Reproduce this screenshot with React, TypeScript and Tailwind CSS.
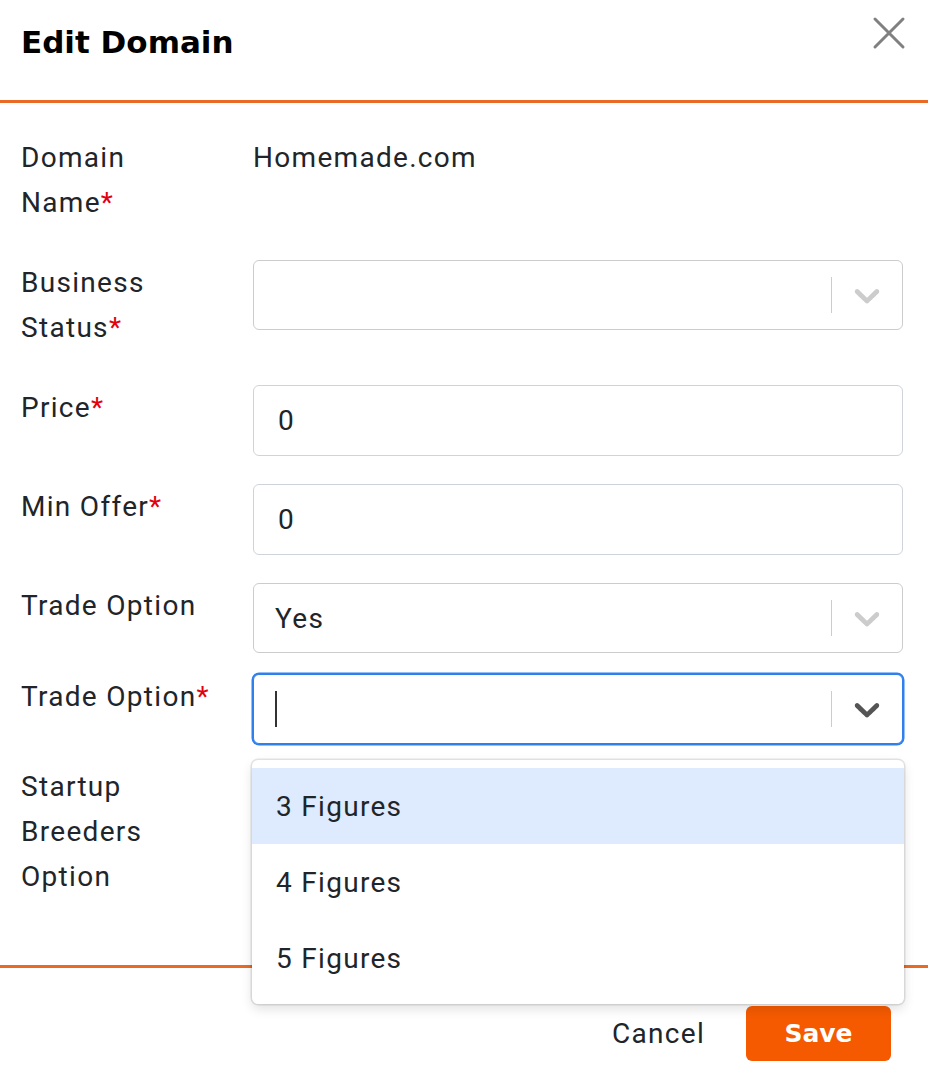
import React from "react";

const body = "font-['Roboto',sans-serif] text-[28px] tracking-[1.3px] leading-[45px] text-[#212529]";

const Chevron = ({ color }: { color: string }) => (
  <svg viewBox="0 0 20 20" width="42" height="42" fill={color} aria-hidden="true">
    <path d="M4.516 7.548c0.436-0.446 1.043-0.481 1.576 0l3.908 3.747 3.908-3.747c0.533-0.481 1.141-0.446 1.574 0 0.436 0.445 0.408 1.197 0 1.615-0.406 0.418-4.695 4.502-4.695 4.502-0.217 0.223-0.502 0.335-0.787 0.335s-0.57-0.112-0.789-0.335c0 0-4.287-4.084-4.695-4.502s-0.436-1.17 0-1.615z" />
  </svg>
);

const Req = () => <span className="text-[#e3000f]">*</span>;

const Select = ({ value, focused }: { value?: string; focused?: boolean }) => (
  <div
    className={
      "flex h-[70px] items-center rounded-[6px] border bg-white " +
      (focused ? "border-[#2f80ed] shadow-[0_0_0_1.5px_#2f80ed]" : "border-[#cccccc]")
    }
  >
    <div className="flex flex-1 items-center pl-[21px]">
      {focused ? <span className="h-[36px] w-[2px] bg-[#333]" /> : <span>{value}</span>}
    </div>
    <span className="h-[36px] w-[1.5px] bg-[#cccccc]" />
    <div className="flex w-[70px] items-center justify-center">
      <Chevron color={focused ? "#555555" : "#cccccc"} />
    </div>
  </div>
);

const Input = ({ value }: { value: string }) => (
  <div className="flex h-[71px] items-center rounded-[6px] border border-[#ced4da] bg-white pl-[24px]">
    {value}
  </div>
);

export default function App() {
  const options = ["3 Figures", "4 Figures", "5 Figures"];
  return (
    <div className={"min-h-screen w-[928px] bg-white " + body}>
      <div className="relative flex h-[100px] items-start px-[21px] pt-[20px]">
        <h1 className="font-['DejaVu_Sans',sans-serif] text-[31px] font-bold leading-[44px] tracking-normal text-black">
          Edit Domain
        </h1>
        <button className="absolute right-[22px] top-[16px]" aria-label="Close">
          <svg width="34" height="34" viewBox="0 0 34 34" stroke="#808080" strokeWidth="3" strokeLinecap="round">
            <path d="M3 3L31 31M31 3L3 31" />
          </svg>
        </button>
      </div>
      <div className="h-[3px] bg-[#ea6a25]" />

      <div className="h-[862px] pl-[21px] pr-[25px] pt-[32px]">
        <div className="flex">
          <div className="w-[232px]">
            Domain
            <br />
            Name<Req />
          </div>
          <div className="flex-1">Homemade.com</div>
        </div>

        <div className="mt-[35px] flex">
          <div className="w-[232px]">
            Business
            <br />
            Status<Req />
          </div>
          <div className="flex-1">
            <Select />
          </div>
        </div>

        <div className="mt-[35px] flex">
          <div className="w-[232px]">
            Price<Req />
          </div>
          <div className="flex-1">
            <Input value="0" />
          </div>
        </div>

        <div className="mt-[28px] flex">
          <div className="w-[232px]">
            Min Offer<Req />
          </div>
          <div className="flex-1">
            <Input value="0" />
          </div>
        </div>

        <div className="mt-[28px] flex">
          <div className="w-[232px]">Trade Option</div>
          <div className="flex-1">
            <Select value="Yes" />
          </div>
        </div>

        <div className="mt-[21px] flex">
          <div className="w-[232px]">
            Trade Option<Req />
          </div>
          <div className="relative z-10 flex-1">
            <Select focused />
            <div className="absolute left-[-1px] right-[-1px] top-[86px] rounded-[6px] bg-white py-[8px] shadow-[0_0_0_1.5px_rgba(0,0,0,0.1),0_5px_12px_rgba(0,0,0,0.12)]">
              {options.map((o, i) => (
                <div
                  key={o}
                  className={
                    "flex h-[76px] items-center pl-[24px] " + (i === 0 ? "bg-[#deebff]" : "bg-white")
                  }
                >
                  {o}
                </div>
              ))}
            </div>
          </div>
        </div>

        <div className="mt-[20px] flex">
          <div className="w-[232px]">
            Startup
            <br />
            Breeders
            <br />
            Option
          </div>
          <div className="flex-1" />
        </div>
      </div>

      <div className="h-[3px] bg-[#ea6a25]" />
      <div className="flex items-center justify-end gap-[41px] pr-[37px] pt-[38px]">
        <button className="text-[28px] text-[#212529]">Cancel</button>
        <button className="h-[55px] w-[145px] rounded-[6px] bg-[#f55a00] font-['DejaVu_Sans',sans-serif] text-[25px] font-bold tracking-normal text-white">
          Save
        </button>
      </div>
    </div>
  );
}
